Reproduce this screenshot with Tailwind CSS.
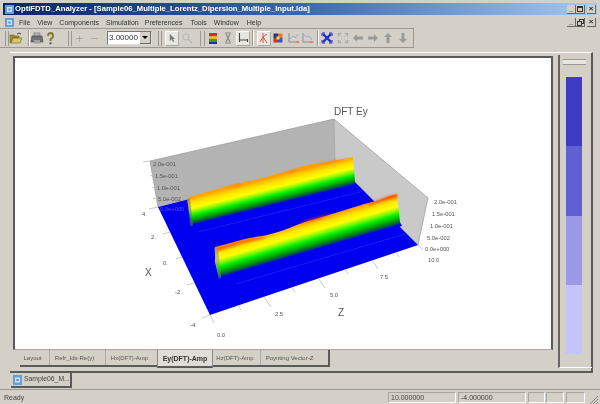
<!DOCTYPE html>
<html>
<head>
<meta charset="utf-8">
<script src="https://cdn.jsdelivr.net/npm/@tailwindcss/browser@4"></script>
</head>
<body class="m-0 overflow-hidden bg-[#d4d0c8]">
<div class="w-[600px] h-[404px] flex flex-col bg-[#d4d0c8] font-['Liberation_Sans',Arial,sans-serif] text-[#222] overflow-hidden blur-[0.4px]">

  <!-- title bar -->
  <div class="mt-[3px] mx-[3px] h-[12px] shrink-0 flex items-center bg-gradient-to-r from-[#0a246a] via-[#3a68b0] to-[#a6caf0]">
    <svg class="ml-[2px] w-[9px] h-[9px]" viewBox="0 0 9 9"><rect width="9" height="9" fill="#5f9fe0"/><rect x="2" y="2" width="5" height="5" fill="#cfe4fa"/><rect x="3.5" y="3.5" width="2" height="2" fill="#4080c8"/></svg>
    <span class="ml-[1px] text-[7.7px] leading-none font-bold text-white whitespace-nowrap">OptiFDTD_Analyzer - [Sample06_Multiple_Lorentz_Dipersion_Multiple_Input.lda]</span>
    <div class="ml-auto flex mr-[1px]">
      <div class="w-[9px] h-[9px] bg-[#d4d0c8] border-r border-b border-[#666] text-[7px] leading-[7px] text-center font-bold">_</div>
      <div class="w-[9px] h-[9px] bg-[#d4d0c8] border-r border-b border-[#666] flex items-center justify-center"><div class="w-[6px] h-[6px] border border-t-2 border-[#333]"></div></div>
      <div class="ml-[2px] w-[9px] h-[9px] bg-[#d4d0c8] border-r border-b border-[#666] text-[8px] leading-[8px] text-center font-bold">×</div>
    </div>
  </div>

  <!-- menu -->
  <div class="h-[13px] mt-[1px] mx-[3px] shrink-0 flex items-center text-[7px] leading-none text-[#333]">
    <svg class="ml-[2px] w-[9px] h-[9px]" viewBox="0 0 9 9"><rect width="9" height="9" fill="#5f9fe0"/><rect x="2" y="2" width="5" height="5" fill="#cfe4fa"/><rect x="3.5" y="3.5" width="2" height="2" fill="#4080c8"/></svg>
    <span class="ml-[5px]">File</span>
    <span class="ml-[7px]">View</span>
    <span class="ml-[7px]">Components</span>
    <span class="ml-[7px]">Simulation</span>
    <span class="ml-[6px]">Preferences</span>
    <span class="ml-[8px]">Tools</span>
    <span class="ml-[7px]">Window</span>
    <span class="ml-[8px]">Help</span>
    <div class="ml-auto flex mr-[1px]">
      <div class="w-[9px] h-[9px] bg-[#d4d0c8] border-r border-b border-[#666] text-[7px] leading-[7px] text-center font-bold">_</div>
      <div class="w-[9px] h-[9px] bg-[#d4d0c8] border-r border-b border-[#666] flex items-center justify-center"><svg class="w-[7px] h-[7px]" viewBox="0 0 7 7" fill="none" stroke="#333"><rect x="2.5" y="0.5" width="4" height="4"/><rect x="0.5" y="2.5" width="4" height="4" fill="#d4d0c8"/></svg></div>
      <div class="ml-[2px] w-[9px] h-[9px] bg-[#d4d0c8] border-r border-b border-[#666] text-[8px] leading-[8px] text-center font-bold">×</div>
    </div>
  </div>

  <!-- toolbar -->
  <div class="h-[20px] w-[414px] mt-[-1px] shrink-0 flex items-center pl-[5px] border-t border-[#9a9890] border-r border-r-[#9a9890] border-b border-b-[#9a9890]">
    <div class="w-[4px] h-[15px] border-x border-[#9a9890]"></div>
    <svg class="w-[14px] h-[14px]" viewBox="0 0 14 14"><path d="M1 4h4l1 1h4v2H4L2 12H1z" fill="#a08c30" stroke="#6a5e20" stroke-width=".6"/><path d="M4 7h9l-2 5H2z" fill="#d8c860" stroke="#6a5e20" stroke-width=".6"/><path d="M8 3q2-2 4 0" fill="none" stroke="#444"/></svg>
    <div class="ml-[5px] w-[2px] h-[16px] border-x border-l-[#9a9890] border-r-white"></div>
    <svg class="w-[14px] h-[14px]" viewBox="0 0 14 14"><path d="M4 2h6v3H4z" fill="#bbb" stroke="#666" stroke-width=".6"/><path d="M2 5h10l1 6H1z" fill="#737373" stroke="#444" stroke-width=".6"/><rect x="4" y="9" width="6" height="3.5" fill="#a0a0a0"/></svg>
    <svg class="w-[13px] h-[14px]" viewBox="0 0 13 14"><path d="M4 5q0-3 2.500-3T9 5q0 2-2.500 3v2" fill="none" stroke="#7f7430" stroke-width="1.800"/><circle cx="6.500" cy="12.300" r="1.200" fill="#666"/></svg>
    <div class="ml-[11px] w-[4px] h-[15px] border-x border-[#9a9890]"></div>
    <div class="w-[15px] text-center text-[13px] leading-none text-[#a8a6a0]">+</div>
    <div class="w-[15px] text-center text-[13px] leading-none text-[#a8a6a0]">−</div>
    <div class="ml-[5px] w-[45px] h-[14px] bg-white border border-[#777] border-r-[#ddd] border-b-[#ddd] flex items-center text-[8px] leading-none text-[#333] pl-[1px]">
      3.00000
      <div class="ml-auto w-[11px] h-[12px] bg-[#d4d0c8] border-r border-b border-[#666] flex items-center justify-center"><div class="w-0 h-0 border-x-[3px] border-x-transparent border-t-[3px] border-t-black"></div></div>
    </div>
    <div class="ml-[6px] w-[4px] h-[15px] border-x border-[#9a9890]"></div>
    <div class="ml-[3px] w-[14px] h-[15px] bg-[#e8e6e0] border border-white border-r-[#aaa8a0] border-b-[#aaa8a0] flex items-center justify-center">
      <svg class="w-[8px] h-[10px]" viewBox="0 0 9 11"><path d="M2 1v8l2-2 1.500 3 1.500-.7L5.500 6.500H8z" fill="#777"/></svg>
    </div>
    <svg class="ml-[1px] w-[14px] h-[14px]" viewBox="0 0 14 14"><circle cx="6" cy="6" r="3" fill="none" stroke="#b8b8b8" stroke-width="1.100"/><path d="M8 8l4 4" stroke="#b8b8b8" stroke-width="1.400"/></svg>
    <div class="ml-[6px] w-[5px] h-[15px] border-x border-[#9a9890]"></div>
    <svg class="ml-[1px] w-[14px] h-[14px]" viewBox="0 0 14 14"><rect x="3" y="2" width="8" height="3" fill="#c83030"/><rect x="3" y="5" width="8" height="3" fill="#d8c030"/><rect x="3" y="8" width="8" height="2.500" fill="#30a030"/><rect x="3" y="10.500" width="8" height="2.500" fill="#283090"/></svg>
    <svg class="ml-[1px] w-[14px] h-[14px]" viewBox="0 0 14 14"><path d="M4 2h6M4 12h6M5 3l4 8M9 3l-4 8" stroke="#8a8a88" stroke-width="1.200" fill="none"/></svg>
    <div class="ml-[1px] w-[14px] h-[15px] bg-[#e8e6e0] border border-white border-r-[#aaa8a0] border-b-[#aaa8a0] flex items-center justify-center">
      <svg class="w-[12px] h-[12px]" viewBox="0 0 12 12"><path d="M2.500 2v6H11M2.500 1v9M10.500 7v3" stroke="#444" fill="none" stroke-width="1.100"/></svg>
    </div>
    <div class="ml-[2px] w-[2px] h-[16px] border-x border-l-[#9a9890] border-r-white"></div>
    <div class="ml-[3px] w-[14px] h-[15px] bg-[#e8e6e0] border border-white border-r-[#aaa8a0] border-b-[#aaa8a0] flex items-center justify-center">
      <svg class="w-[12px] h-[12px]" viewBox="0 0 12 12"><path d="M5 1v10M5 5L9 2M5 5L2 10M5 5l4 6" stroke="#d85050" fill="none" stroke-width="1"/></svg>
    </div>
    <svg class="w-[14px] h-[14px]" viewBox="0 0 14 14"><rect x="2.500" y="2.500" width="4.500" height="4.500" fill="#283888"/><rect x="7" y="2.500" width="4.500" height="4.500" fill="#e07828"/><rect x="2.500" y="7" width="4.500" height="4.500" fill="#d03028"/><rect x="7" y="7" width="4.500" height="4.500" fill="#3858c0"/><rect x="5.500" y="5.500" width="3" height="3" fill="#f0e060"/></svg>
    <svg class="ml-[2px] w-[14px] h-[14px]" viewBox="0 0 14 14"><path d="M2 2v9h9" stroke="#8a8a98" fill="none"/><path d="M3 8l3-3 2 2 3-4" stroke="#98a8d0" fill="none"/><rect x="9" y="10" width="3" height="2" fill="#e08080"/></svg>
    <svg class="w-[14px] h-[14px]" viewBox="0 0 14 14"><path d="M2 2v9h9" stroke="#8a8a98" fill="none"/><path d="M3 4l3 2 2-1 3 4" stroke="#98a8d0" fill="none"/><rect x="9" y="10" width="3" height="2" fill="#e08080"/></svg>
    <div class="ml-[2px] w-[2px] h-[16px] border-x border-l-[#9a9890] border-r-white"></div>
    <svg class="ml-[1px] w-[14px] h-[14px]" viewBox="0 0 14 14"><path d="M3 3l8 8M11 3l-8 8" stroke="#2030c8" stroke-width="2.400"/><path d="M2 2h3M2 2v3M12 2H9M12 2v3M2 12h3M2 12V9M12 12H9M12 12V9" stroke="#2030c8"/></svg>
    <svg class="ml-[2px] w-[14px] h-[14px]" viewBox="0 0 14 14"><path d="M2 2h3v1H3v2H2zM12 2H9v1h2v2h1zM2 12h3v-1H3V9H2zM12 12H9v-1h2V9h1zM4 4l2 2M10 4L8 6M4 10l2-2M10 10L8 8" fill="#a8a8a6" stroke="#a8a8a6" stroke-width=".5"/></svg>
    <svg class="ml-[1px] w-[14px] h-[14px]" viewBox="0 0 14 14"><path d="M2 7l4-4v2.500h6v3H6V11z" fill="#9a9a98"/></svg>
    <svg class="ml-[1px] w-[14px] h-[14px]" viewBox="0 0 14 14"><path d="M12 7L8 3v2.500H2v3h6V11z" fill="#9a9a98"/></svg>
    <svg class="ml-[1px] w-[14px] h-[14px]" viewBox="0 0 14 14"><path d="M7 2L3 6h2.500v6h3V6H11z" fill="#9a9a98"/></svg>
    <svg class="ml-[1px] w-[14px] h-[14px]" viewBox="0 0 14 14"><path d="M7 12L3 8h2.500V2h3v6H11z" fill="#9a9a98"/></svg>
  </div>

  <!-- mdi child frame -->
  <div class="ml-[10px] mt-[4px] w-[583px] h-[321px] shrink-0 flex border-t border-t-white border-r-2 border-r-[#5a5a5a] border-b-2 border-b-[#5a5a5a]">
    <div class="ml-[3px] mt-[3px] w-[540px] shrink-0 flex flex-col">
      <div class="h-[294px] shrink-0 border-2 border-[#5a5a5a] border-b-[#a8a8a4] border-b-1 bg-white">
        <svg class="w-[536px] h-[290px] block" viewBox="15 58 536 290" font-family="Liberation Sans, Arial, sans-serif">
          <defs>
            <linearGradient id="rb" gradientUnits="userSpaceOnUse" x1="187" y1="198" x2="193.600" y2="224.600">
              <stop offset="0" stop-color="#ffa000"/><stop offset=".1" stop-color="#ffc000"/><stop offset=".25" stop-color="#ffec00"/><stop offset=".4" stop-color="#ffff00"/><stop offset=".54" stop-color="#80f800"/><stop offset=".66" stop-color="#00f000"/><stop offset=".82" stop-color="#00a000"/><stop offset=".93" stop-color="#005848"/><stop offset="1" stop-color="#0000e8"/>
            </linearGradient>
            <linearGradient id="rf" gradientUnits="userSpaceOnUse" x1="215" y1="247" x2="223.600" y2="276.400">
              <stop offset="0" stop-color="#ff8400"/><stop offset=".1" stop-color="#ffb400"/><stop offset=".25" stop-color="#ffec00"/><stop offset=".4" stop-color="#ffff00"/><stop offset=".54" stop-color="#80f800"/><stop offset=".66" stop-color="#00f000"/><stop offset=".82" stop-color="#00a000"/><stop offset=".93" stop-color="#005848"/><stop offset="1" stop-color="#0000e8"/>
            </linearGradient>
            <filter id="s" x="-5%" y="-5%" width="110%" height="110%"><feGaussianBlur stdDeviation=".5"/></filter>
            <filter id="c" x="-5%" y="-20%" width="110%" height="140%"><feGaussianBlur stdDeviation="1"/></filter>
          </defs>
          <polygon points="150,161 334,119 335,162 158,207" fill="#b3b3b3"/>
          <polygon points="334,119 428,198 418,245 335,162" fill="#c9c9c9"/>
          <path d="M150 161L334 119L428 198M334 119L335 162M150 161L158 207M428 198L418 245" stroke="#9a9a9a" stroke-width=".7" fill="none"/>
          <polygon points="158,207 335,162 418,245 210,315" fill="#0000f0"/>
          <g stroke="#1828fa" stroke-width=".8" fill="none" filter="url(#s)">
            <path d="M198 232L360 192"/><path d="M236 284L405 234"/>
          </g>
          <g filter="url(#s)">
            <path d="M187 198C205 192 215 190 230 185C245 182 265 178 275 174C290 172 300 165 320 163C335 160 345 159 353 157L355 182L357 186L192 226L189 212Z" fill="url(#rb)"/>
            <path d="M215 247C232 243 245 238 262 236C285 232 295 224 315 219C340 212 365 203 380 200C388 197 392 195 397 194L400 222L402 226L219 279L215 262Z" fill="url(#rf)"/>
            <path d="M187 199L190 226L193 226L190 198Z" fill="#667" opacity=".5"/>
            <path d="M214 248L216 265L219 279L221 278L218 247Z" fill="#889" opacity=".5"/>
          </g>
          <g filter="url(#c)" fill="#f03800" opacity=".65">
            <path d="M217 248C235 243 250 238 268 236L262 239C245 242 232 246 218 251Z"/>
            <path d="M298 224C305 220 320 216 332 213L320 219Z"/>
            <path d="M368 204C380 199 390 195 397 194L398 197C385 200 375 203 368 206Z"/>
            <path d="M225 188L243 183L240 186Z" opacity=".5"/><path d="M278 174L300 168L295 171Z" opacity=".5"/><path d="M315 164L350 157L335 162Z" opacity=".4"/>
          </g>
          <g stroke="#bbb" stroke-width=".8">
            <path d="M150 161L143 162M153 175L150 176M155 187L152 188M156 198L153 199M158 207L149 209M170 232L163 234M182 257L176 259M194 283L187 285M210 315L202 318"/>
            <path d="M210 315L214 323M238 305L241 310M264 297L271 307M292 287L295 292M318 278L325 288M345 269L348 274M372 260L378 269M396 252L399 257M418 245L423 250"/>
          </g>
          <g fill="#555" font-size="5.800">
            <text x="153" y="165.500">2.0e-001</text><text x="155" y="178">1.5e-001</text><text x="157" y="190">1.0e-001</text><text x="158" y="201">5.0e-002</text>
            <text x="160" y="211" fill="#5050f0">0.0e+000</text>
            <text x="434" y="203.500">2.0e-001</text><text x="432" y="215.500">1.5e-001</text><text x="430" y="228">1.0e-001</text><text x="427" y="240">5.0e-002</text><text x="425" y="251">0.0e+000</text><text x="428" y="262">10.0</text>
            <text x="142" y="215.500">4.</text><text x="151" y="238.500">2.</text><text x="163" y="265">0.</text><text x="175" y="294">-2.</text><text x="190" y="327">-4.</text>
            <text x="217" y="336.500">0.0</text><text x="275" y="315.500">2.5</text><text x="330" y="296.500">5.0</text><text x="380" y="279">7.5</text>
          </g>
          <text x="334" y="114.500" font-size="10" fill="#555">DFT Ey</text>
          <text x="145" y="275.500" font-size="10" fill="#555">X</text>
          <text x="338" y="315.500" font-size="10" fill="#555">Z</text>
        </svg>
      </div>
      <!-- sheet tabs -->
      <div class="h-[17px] flex items-start ml-[7px] w-[310px] border-b-2 border-[#5a5a5a] border-r-2 text-[6px] leading-none text-[#555] relative">
        <div class="w-[29px] h-[15px] pr-[4px] flex items-center justify-center">Layout</div>
        <div class="w-[56px] h-[15px] pr-[6px] flex items-center justify-center border-l border-[#aaa]">Refr_Idx-Re(y)</div>
        <div class="w-[52px] h-[15px] pr-[4px] flex items-center justify-center border-l border-[#aaa]">Hx(DFT)-Amp</div>
        <div class="w-[56px] h-[18px] flex items-center justify-center bg-[#e0ddd6] border-x border-[#888] border-b-2 border-b-[#5a5a5a] font-bold text-[7px] text-[#333]">Ey(DFT)-Amp</div>
        <div class="w-[47px] h-[15px] pr-[3px] flex items-center justify-center">Hz(DFT)-Amp</div>
        <div class="flex-1 h-[15px] pr-[10px] flex items-center justify-center border-l border-[#aaa]">Poynting Vector-Z</div>
      </div>
    </div>
    <!-- legend panel -->
    <div class="ml-[5px] mt-[2px] w-[34px] h-[313px] shrink-0 flex flex-col border-l-2 border-l-[#666] border-b border-b-white">
      <div class="ml-[3px] mt-[4px] w-[23px] h-[6px] border-y border-[#9a9890] bg-[#e8e6e0]"></div>
      <div class="ml-[6px] mt-[12px] w-[16px] h-[277px] flex flex-col">
        <div class="h-[69px] bg-[#3c3cc4]"></div>
        <div class="h-[70px] bg-[#6060d4]"></div>
        <div class="h-[69px] bg-[#9a9ae8]"></div>
        <div class="h-[69px] bg-[#c4c4ff]"></div>
      </div>
    </div>
  </div>

  <!-- document tab -->
  <div class="h-[15px] shrink-0 ml-[11px] w-[61px] flex items-center bg-[#d4d0c8] border-r-2 border-b-2 border-[#5a5a5a]">
    <svg class="ml-[2px] w-[9px] h-[10px]" viewBox="0 0 9 10"><rect width="9" height="10" fill="#5f9fe0"/><rect x="2" y="2.500" width="5" height="5" fill="#cfe4fa"/><rect x="3.500" y="4" width="2" height="2" fill="#4080c8"/></svg>
    <span class="ml-[2px] text-[6.800px] leading-none text-[#444] whitespace-nowrap">Sample06_M...</span>
  </div>

  <!-- status bar -->
  <div class="mt-[1px] flex-1 flex items-center border-t border-t-[#9a9890] text-[7px] leading-none text-[#444]">
    <div class="w-[388px] pl-[4px]">Ready</div>
    <div class="w-[68px] h-[11px] flex items-center pl-[2px] border border-[#a8a6a0] border-r-white border-b-white">10.000000</div>
    <div class="ml-[2px] w-[68px] h-[11px] flex items-center pl-[2px] border border-[#a8a6a0] border-r-white border-b-white">-4.000000</div>
    <div class="ml-[2px] w-[17px] h-[11px] border border-[#a8a6a0] border-r-white border-b-white"></div>
    <div class="ml-[1px] w-[18px] h-[11px] border border-[#a8a6a0] border-r-white border-b-white"></div>
    <div class="ml-[2px] w-[19px] h-[11px] border border-[#a8a6a0] border-r-white border-b-white"></div>
    <svg class="ml-[4px] w-[9px] h-[9px] self-end" viewBox="0 0 9 9"><path d="M9 1L1 9M9 4L4 9M9 7L7 9" stroke="#8a8880"/></svg>
  </div>
</div>
</body>
</html>
